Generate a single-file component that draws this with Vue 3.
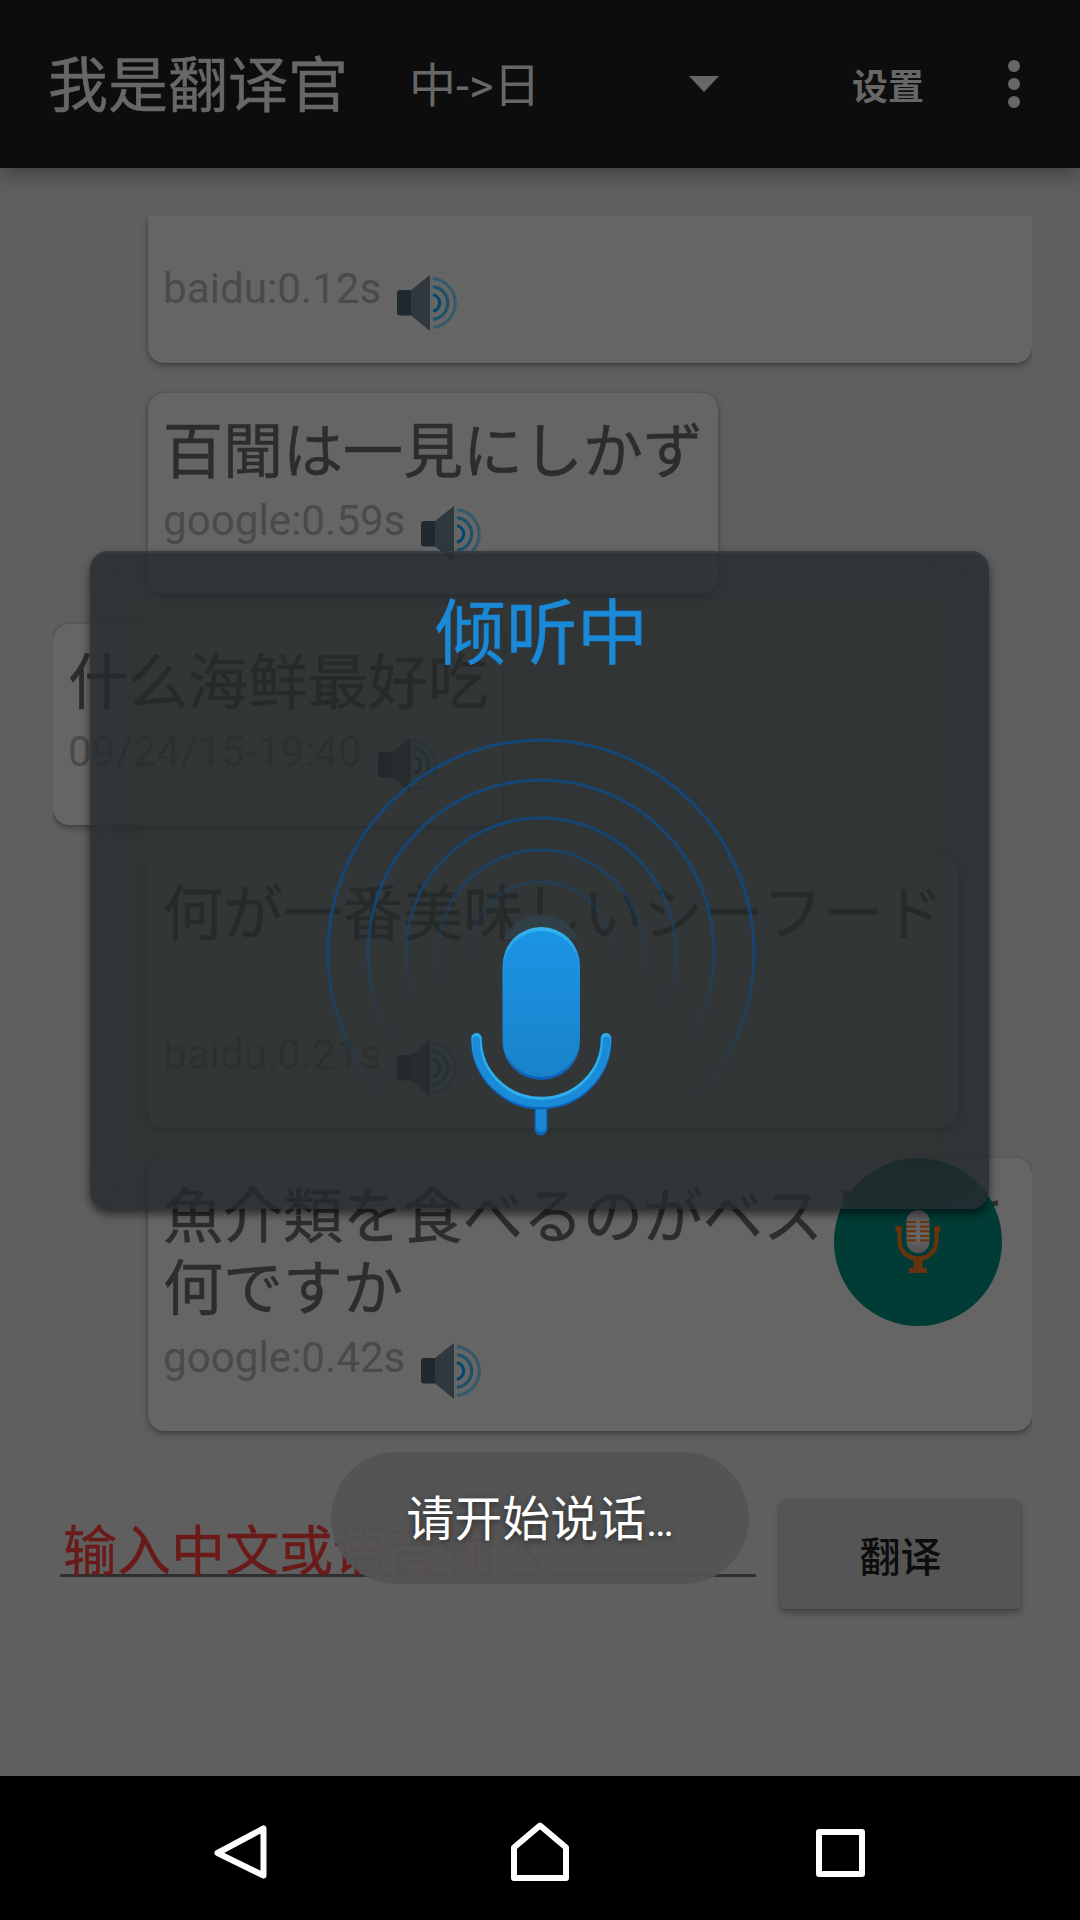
<script setup>
const messages = [
  { side: 'out', text: null, meta: 'baidu:0.12s', cut: true, lang: 'ja' },
  { side: 'out', text: '百聞は一見にしかず', meta: 'google:0.59s', lang: 'ja' },
  { side: 'in', text: '什么海鲜最好吃', meta: '09/24/15-19:40', lang: 'zh' },
  { side: 'out', text: '何が一番美味しいシーフード\n\u00a0', meta: 'baidu:0.21s', lang: 'ja' },
  { side: 'out', text: '魚介類を食べるのがベストとは何ですか', meta: 'google:0.42s', lang: 'ja', wide: true },
]

const rings = [
  { r: 213, o: 1, hold: 0.5, end: 0.84 },
  { r: 173, o: 1, hold: 0.35, end: 0.76 },
  { r: 135, o: 0.95, hold: 0.2, end: 0.72 },
  { r: 103, o: 0.75, hold: 0.05, end: 0.66 },
  { r: 71, o: 0.45, hold: 0, end: 0.62 },
]
</script>

<template>
  <div class="screen">
    <header class="bar">
      <h1>我是翻译官</h1>
      <div class="spinner">
        <span>中-&gt;日</span>
        <svg width="30" height="16" viewBox="0 0 30 16"><path d="M0 0H30L15 16Z" fill="#676767" /></svg>
      </div>
      <span class="settings">设置</span>
      <svg class="more" width="12" height="48" viewBox="0 0 12 48" fill="#676767">
        <circle cx="6" cy="6" r="6" /><circle cx="6" cy="24" r="6" /><circle cx="6" cy="42" r="6" />
      </svg>
    </header>

    <main class="body">
      <div class="list">
        <article v-for="(m, i) in messages" :key="i" class="card" :class="[m.side, m.lang, { cut: m.cut, wide: m.wide }]">
          <p v-if="m.text" class="text">{{ m.text }}</p>
          <div class="meta">
            <span>{{ m.meta }}</span>
            <svg width="60" height="56" viewBox="0 0 60 56">
              <rect width="60" height="56" fill="#686868" fill-opacity=".5" />
              <path d="M3 15H14V40.500H3Q0 40.500 0 37.500V18Q0 15 3 15Z" fill="#20292f" />
              <path d="M14 15L33 0V56L14 40.500Z" fill="#2f383e" />
              <g fill="none" stroke-width="3.200">
                <path d="M36 19.700A8.500 8.500 0 0 1 36 36.300" stroke="#00486c" />
                <path d="M36 11.600A16.500 16.500 0 0 1 36 44.400" stroke="#1c516b" />
                <path d="M36 3.600A24.500 24.500 0 0 1 36 52.400" stroke="#35596a" />
              </g>
            </svg>
          </div>
        </article>
      </div>
      <form class="entry" @submit.prevent>
        <div class="field">输入中文或语音输入</div>
        <button type="submit">翻译</button>
      </form>
    </main>

    <nav class="nav">
      <svg width="62" height="62" viewBox="0 0 62 62"><path d="M54.500 6.500V53.500L8.500 31Z" /></svg>
      <svg width="62" height="62" viewBox="0 0 62 62"><path d="M5 25.500L31 3.500L57 25.500V56H5Z" /></svg>
      <svg width="62" height="62" viewBox="0 0 62 62"><path d="M10 10H53V52H10Z" /></svg>
    </nav>

    <div class="fab">
      <svg width="46" height="64" viewBox="0 0 46 64">
        <defs>
          <linearGradient id="cap" x1="0" y1="0" x2="0" y2="1">
            <stop offset="0" stop-color="#5c5c5c" /><stop offset=".6" stop-color="#676767" /><stop offset="1" stop-color="#505050" />
          </linearGradient>
        </defs>
        <rect x="11.500" y="0" width="23" height="43" rx="11.500" fill="url(#cap)" />
        <path d="M11.500 12h9.500M11.500 16.700h9.500M11.500 21.200h9.500M11.500 26h9.500M11.500 30.300h9.500M25 12h9.500M25 16.700h9.500M25 21.200h9.500M25 26h9.500M25 30.300h9.500" stroke="#6b3512" stroke-width="2.200" />
        <path d="M4.500 17V30C4.500 41 12 48.500 23 48.500S41.500 41 41.500 30V17" fill="none" stroke="#66330f" stroke-width="4.500" />
        <circle cx="3.500" cy="19" r="3.200" fill="#66330f" /><circle cx="42.500" cy="19" r="3.200" fill="#66330f" />
        <path d="M18.500 50H27.500V58H32V63H14V58H18.500Z" fill="#66330f" />
      </svg>
    </div>

    <section class="dialog">
      <h2>倾听中</h2>
      <svg class="listen" width="440" height="410" viewBox="321 734 440 410">
        <defs>
          <linearGradient v-for="(g, i) in rings" :id="'ring' + i" :key="i" x1="0" y1="0" x2="0" y2="1">
            <stop offset="0" stop-color="#124779" :stop-opacity="g.o" />
            <stop :offset="g.hold" stop-color="#124779" :stop-opacity="g.o * 0.9" />
            <stop :offset="g.end" stop-color="#124779" stop-opacity="0" />
          </linearGradient>
          <linearGradient id="capsule" x1="0" y1="0" x2="0" y2="1">
            <stop offset="0" stop-color="#1b94e4" /><stop offset="1" stop-color="#1983ca" />
          </linearGradient>
          <linearGradient id="rim" x1="0" y1="0" x2="0" y2="1">
            <stop offset="0" stop-color="#34b6ee" /><stop offset=".25" stop-color="#1c94e2" />
            <stop offset=".8" stop-color="#1881cc" /><stop offset="1" stop-color="#0c5db5" />
          </linearGradient>
        </defs>
        <circle v-for="(g, i) in rings" :key="i" cx="541" cy="953" :r="g.r" fill="none" :stroke="'url(#ring' + i + ')'" stroke-width="3" />
        <path d="M504 939A40 40 0 0 1 578 939Z" fill="#31434b" fill-opacity=".8" />
        <rect x="502.500" y="927" width="77.500" height="153" rx="38.700" fill="url(#rim)" />
        <rect x="504" y="931" width="74.500" height="146" rx="37.200" fill="url(#capsule)" />
        <path d="M541 1108V1129" stroke="#0f67bd" stroke-width="13" stroke-linecap="round" />
        <path d="M541 1106V1127" stroke="#1987d2" stroke-width="10" stroke-linecap="round" />
        <g fill="none" stroke-linecap="round">
          <path d="M476.500 1039A64.500 64.500 0 0 0 606 1039" stroke="#0d62b9" stroke-width="11.500" />
          <path d="M476.500 1038A64.500 63.500 0 0 0 606 1038" stroke="#2faee9" stroke-width="10" />
          <path d="M476 1040A65.200 63.500 0 0 0 606.500 1040" stroke="#1a8bd7" stroke-width="7.500" />
        </g>
      </svg>
    </section>

    <div class="toast">请开始说话<span class="dots">…</span></div>
  </div>
</template>

<style>
body {
  margin: 0;
  background: #000;
}
</style>

<style scoped>
.screen {
  position: relative;
  display: flex;
  flex-direction: column;
  width: 1080px;
  height: 1920px;
  overflow: hidden;
  background: #5f5f5f;
  font-family: Roboto, "Noto Sans CJK SC", sans-serif;
}
h1, h2, p { margin: 0; font-weight: 400; }
svg { display: block; flex: none; }

.bar {
  flex: none;
  box-sizing: border-box;
  height: 168px;
  display: flex;
  align-items: center;
  padding: 0 60px 0 48px;
  background: #0d0d0d;
  color: #676767;
  box-shadow: 0 6px 20px rgba(0, 0, 0, 0.34);
}
.bar h1 {
  width: 361px;
  padding-top: 5px;
  font-size: 60px;
  line-height: 84px;
  -webkit-text-stroke: 0.5px;
}
.spinner {
  width: 310px;
  display: flex;
  align-items: center;
  justify-content: space-between;
  font-size: 47px;
  line-height: 70px;
}
.spinner span { padding-top: 4px; }
.settings { margin-left: 133px; width: 156px; font-size: 36px; font-weight: 700; }

.body { flex: 1; min-height: 0; padding-top: 48px; }
.list {
  height: 1224px;
  width: 979px;
  margin-left: 53px;
  overflow: hidden;
  display: flex;
  flex-direction: column;
  gap: 30px;
}
.card {
  flex: none;
  box-sizing: border-box;
  width: max-content;
  max-width: 884px;
  padding: 24px 15px 32px;
  border-radius: 16px;
  background: #656565;
  box-shadow: 0 3px 6px rgba(0, 0, 0, 0.32), 0 0 2px rgba(0, 0, 0, 0.2);
}
.out { margin-left: 95px; }
.cut {
  width: 884px;
  height: 147px;
  padding-top: 38px;
  border-radius: 0 0 16px 16px;
}
.wide { width: 884px; }
.ja { font-family: Roboto, "Noto Sans CJK JP", sans-serif; }
.text {
  font-size: 60px;
  line-height: 72px;
  font-kerning: none;
  color: #2d2d2d;
  white-space: pre-wrap;
  word-break: break-all;
  -webkit-text-stroke: 0.5px;
}
.meta {
  display: flex;
  align-items: flex-start;
  gap: 16px;
  height: 77px;
  color: #4a4a4a;
  font-size: 42.2px;
  line-height: 49px;
}
.meta span { margin-top: 10px; }
.text + .meta { height: 73px; }
.meta svg { margin-top: 21px; }
.text + .meta svg { margin-top: 17px; }
.text + .meta span { margin-top: 7px; }

.entry { display: flex; align-items: flex-start; padding: 60px 59px 0 60px; }
.field {
  width: 696px;
  box-sizing: border-box;
  height: 77px;
  margin-right: 24px;
  padding: 13px 3px 0;
  border-bottom: 3px solid #2f2f2f;
  font-size: 54px;
  line-height: 80px;
  white-space: nowrap;
  color: #6b1a1a;
  -webkit-text-stroke: 0.4px;
}
button {
  width: 241px;
  height: 109px;
  border: 0;
  border-radius: 6px;
  padding: 0 0 1px;
  background: #555;
  color: #0d0d0d;
  font: 500 41px Roboto, "Noto Sans CJK SC", sans-serif;
  box-shadow: 0 4px 6px rgba(0, 0, 0, 0.3), 0 0 2px rgba(0, 0, 0, 0.15);
}

.nav {
  flex: none;
  height: 144px;
  box-sizing: border-box;
  display: flex;
  justify-content: space-between;
  padding: 46px 209px 0;
  background: #000;
}
.nav path { fill: none; stroke: #fff; stroke-width: 6; stroke-linejoin: round; }

.fab {
  position: absolute;
  left: 834px;
  top: 1158px;
  width: 168px;
  height: 168px;
  border-radius: 50%;
  background: #003c35;
  display: flex;
  justify-content: center;
}
.fab svg { margin-top: 52px; }

.dialog {
  position: absolute;
  left: 90px;
  top: 551px;
  width: 899px;
  height: 658px;
  border-radius: 18px;
  background: rgba(37, 42, 43, 0.79);
  box-shadow: 0 5px 10px rgba(0, 0, 0, 0.55), inset 0 0 50px rgba(46, 53, 64, 0.4), inset 0 2px 2px rgba(70, 82, 88, 0.5);
  display: flex;
  flex-direction: column;
  align-items: center;
}
.dialog h2 {
  padding: 31px 0 0 4px;
  height: 152px;
  font-size: 71px;
  line-height: 104px;
  color: #1989d8;
  -webkit-text-stroke: 0.5px;
}
.listen { margin-left: 3px; }

.toast {
  position: absolute;
  left: 331px;
  top: 1452px;
  width: 418px;
  height: 132px;
  box-sizing: border-box;
  padding-top: 33px;
  border-radius: 66px;
  background: rgba(84, 84, 84, 0.94);
  color: #fff;
  font-size: 48px;
  line-height: 70px;
  text-align: center;
  text-shadow: 0 2px 6px rgba(0, 0, 0, 0.5);
}
.dots { font-size: 41px; }
</style>
